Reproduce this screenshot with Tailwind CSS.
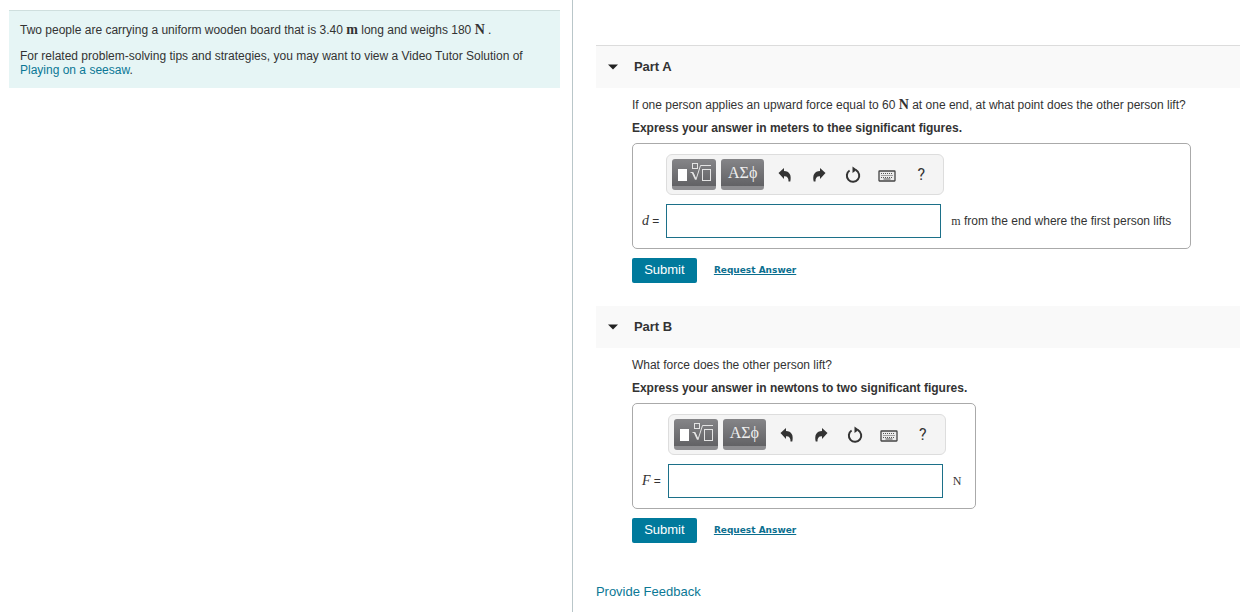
<!DOCTYPE html>
<html lang="en">
<head>
    <meta charset="UTF-8">
    <meta name="viewport" content="width=device-width, initial-scale=1.0">
    <title>Wooden board</title>
    <script src="https://cdn.jsdelivr.net/npm/@tailwindcss/browser@4"></script>
</head>
<body class="bg-white font-['Liberation_Sans',Arial,sans-serif] text-[12px] leading-[14px] text-[#333]">

    <!-- Shared icons -->
    <svg class="hidden">
        <symbol id="templates" viewBox="0 0 44 31">
            <rect x="6" y="10" width="9" height="12" fill="#fff"/>
            <g fill="none" stroke="#e4e4e4">
                <rect x="20.500" y="4.500" width="5" height="5"/>
                <path d="M18.500 13.500h2.500l3 7L28.500 6.500H39"/>
                <path d="M20.500 13.500l3.200 7" stroke-width="1.600"/>
                <rect x="30.500" y="10.500" width="8" height="11"/>
            </g>
        </symbol>
        <symbol id="undo" viewBox="0 0 14 14">
            <path d="M0.500 5L6 0v3c5.500 0.200 7.700 4 6.300 10.500h-1.800c0.200-3.500-1.200-5.500-4.500-5.300v2.800z" fill="#333"/>
        </symbol>
        <symbol id="redo" viewBox="0 0 14 14">
            <path d="M13.500 5L8 0v3c-5.500 0.200-7.700 4-6.300 10.500h1.800c-0.200-3.500 1.200-5.500 4.500-5.300v2.800z" fill="#333"/>
        </symbol>
        <symbol id="reset" viewBox="0 0 16 18">
            <path d="M11 4.200A6.200 6.200 0 1 1 4.600 4.500" fill="none" stroke="#333" stroke-width="2"/>
            <path d="M7.500 0.500L12 3.800L7.500 7z" fill="#333"/>
        </symbol>
        <symbol id="keyboard" viewBox="0 0 18 12">
            <rect x="1" y="1" width="16" height="10" rx="0.500" fill="#ececec" stroke="#444" stroke-width="1.300"/>
            <path d="M3 3.500h12M3.500 5.500h11M3 7.500h12" stroke="#555" stroke-dasharray="1 1"/>
            <path d="M5.500 9h7" stroke="#555"/>
        </symbol>
    </svg>

    <div class="flex min-h-screen">
        <!-- Problem statement -->
        <aside class="w-[46.2%] shrink-0 border-r border-[#b9c6c9] pt-[10px] pr-3 pl-[9px]">
            <div class="border-t border-[#cfdfde] bg-[#e6f5f5] pt-3 pr-5 pb-[11px] pl-[11px]">
                <p class="mb-3">Two people are carrying a uniform wooden board that is 3.40 <b class="font-['Liberation_Serif',serif] text-[14px] leading-[14px]">m</b> long and weighs 180 <b class="font-['Liberation_Serif',serif] text-[14px] leading-[14px]">N</b> .</p>
                <p>For related problem-solving tips and strategies, you may want to view a Video Tutor Solution of <a href="#" class="text-[#0b7895]">Playing on a seesaw</a>.</p>
            </div>
        </aside>

        <!-- Parts -->
        <main class="min-w-0 grow pt-[45px] pl-[23px]">
            <section class="mb-[23px]">
                <h2 class="flex h-[43px] items-center gap-4 border-t border-[#dcdcdc] bg-[#f9f9f9] pl-3 text-[13px] font-bold">
                    <svg class="h-[6px] w-[10px]" viewBox="0 0 10 6"><path d="M0 0.500h10L5 5.500z" fill="#222"/></svg>
                    Part A
                </h2>
                <div class="pt-[10px] pl-9">
                    <p class="mb-[9px]">If one person applies an upward force equal to 60 <b class="font-['Liberation_Serif',serif] text-[14px] leading-[14px]">N</b> at one end, at what point does the other person lift?</p>
                    <p class="mb-2 font-bold">Express your answer in meters to thee significant figures.</p>

                    <form>
                        <div class="mb-[9px] grid w-fit grid-cols-[auto_278px_auto] items-center gap-x-[7px] gap-y-[9px] rounded-[5px] border border-[#aaa] pt-[10px] pr-[19px] pb-[10px] pl-[9px]">
                            <div class="col-start-2 flex h-[41px] items-center rounded-[6px] border border-[#ddd] bg-[#f4f4f4] pl-[5px]">
                                <button type="button" aria-label="Templates" class="mr-[5px] h-[31px] w-[44px] rounded-[3px] border-b-4 border-[#8d8d90] bg-linear-to-b from-[#858588] to-[#626265]"><svg class="h-[31px] w-[44px]"><use href="#templates"/></svg></button>
                                <button type="button" class="mr-1 h-[31px] w-[43px] rounded-[3px] border-b-4 border-[#8d8d90] bg-linear-to-b from-[#858588] to-[#626265] font-['Liberation_Serif',serif] text-[16px] text-[#eee]">ΑΣϕ</button>
                                <button type="button" aria-label="Undo" class="flex h-[31px] w-[34px] items-center justify-center"><svg class="size-[14px]"><use href="#undo"/></svg></button>
                                <button type="button" aria-label="Redo" class="flex h-[31px] w-[34px] items-center justify-center"><svg class="size-[14px]"><use href="#redo"/></svg></button>
                                <button type="button" aria-label="Reset" class="flex h-[31px] w-[34px] items-center justify-center"><svg class="h-[18px] w-[16px]"><use href="#reset"/></svg></button>
                                <button type="button" aria-label="Keyboard" class="flex h-[31px] w-[34px] items-center justify-center pt-[3px]"><svg class="h-[12px] w-[18px]"><use href="#keyboard"/></svg></button>
                                <button type="button" class="h-[31px] w-[34px] font-[Roboto,sans-serif] text-[16px]">?</button>
                            </div>
                            <label for="answer-a" class="col-start-1"><i class="font-['Liberation_Serif',serif] text-[14px] leading-[14px]">d</i> =</label>
                            <input id="answer-a" type="text" class="h-[34px] w-[275px] border border-[#1c7089] bg-white px-2 text-[14px] outline-none">
                            <span><span class="font-['Liberation_Serif',serif]">m</span> from the end where the first person lifts</span>
                        </div>
                        <div class="flex items-center gap-[17px]">
                            <button type="submit" class="h-[25px] w-[65px] rounded-[2px] bg-[#007a9c] pb-[2px] text-[13px] text-white">Submit</button>
                            <a href="#" class="pb-[2px] font-['DejaVu_Sans',Verdana,sans-serif] text-[9px] font-bold text-[#0b6f8f] underline">Request Answer</a>
                        </div>
                    </form>
                </div>
            </section>

            <section class="mb-[42px]">
                <h2 class="flex h-[42px] items-center gap-4 bg-[#f9f9f9] pl-3 text-[13px] font-bold">
                    <svg class="h-[6px] w-[10px]" viewBox="0 0 10 6"><path d="M0 0.500h10L5 5.500z" fill="#222"/></svg>
                    Part B
                </h2>
                <div class="pt-[10px] pl-9">
                    <p class="mb-[9px]">What force does the other person lift?</p>
                    <p class="mb-2 font-bold">Express your answer in newtons to two significant figures.</p>

                    <form>
                        <div class="mb-[9px] grid w-fit grid-cols-[auto_278px_auto] items-center gap-x-[7px] gap-y-[9px] rounded-[5px] border border-[#aaa] pt-[10px] pr-[14px] pb-[10px] pl-[9px]">
                            <div class="col-start-2 flex h-[41px] items-center rounded-[6px] border border-[#ddd] bg-[#f4f4f4] pl-[5px]">
                                <button type="button" aria-label="Templates" class="mr-[5px] h-[31px] w-[44px] rounded-[3px] border-b-4 border-[#8d8d90] bg-linear-to-b from-[#858588] to-[#626265]"><svg class="h-[31px] w-[44px]"><use href="#templates"/></svg></button>
                                <button type="button" class="mr-1 h-[31px] w-[43px] rounded-[3px] border-b-4 border-[#8d8d90] bg-linear-to-b from-[#858588] to-[#626265] font-['Liberation_Serif',serif] text-[16px] text-[#eee]">ΑΣϕ</button>
                                <button type="button" aria-label="Undo" class="flex h-[31px] w-[34px] items-center justify-center"><svg class="size-[14px]"><use href="#undo"/></svg></button>
                                <button type="button" aria-label="Redo" class="flex h-[31px] w-[34px] items-center justify-center"><svg class="size-[14px]"><use href="#redo"/></svg></button>
                                <button type="button" aria-label="Reset" class="flex h-[31px] w-[34px] items-center justify-center"><svg class="h-[18px] w-[16px]"><use href="#reset"/></svg></button>
                                <button type="button" aria-label="Keyboard" class="flex h-[31px] w-[34px] items-center justify-center pt-[3px]"><svg class="h-[12px] w-[18px]"><use href="#keyboard"/></svg></button>
                                <button type="button" class="h-[31px] w-[34px] font-[Roboto,sans-serif] text-[16px]">?</button>
                            </div>
                            <label for="answer-b" class="col-start-1"><i class="font-['Liberation_Serif',serif] text-[14px] leading-[14px]">F</i> =</label>
                            <input id="answer-b" type="text" class="h-[34px] w-[275px] border border-[#1c7089] bg-white px-2 text-[14px] outline-none">
                            <span class="font-['Liberation_Serif',serif]">N</span>
                        </div>
                        <div class="flex items-center gap-[17px]">
                            <button type="submit" class="h-[25px] w-[65px] rounded-[2px] bg-[#007a9c] pb-[2px] text-[13px] text-white">Submit</button>
                            <a href="#" class="pb-[2px] font-['DejaVu_Sans',Verdana,sans-serif] text-[9px] font-bold text-[#0b6f8f] underline">Request Answer</a>
                        </div>
                    </form>
                </div>
            </section>

            <a href="#" class="text-[13px] text-[#0b7895]">Provide Feedback</a>
        </main>
    </div>
</body>
</html>
